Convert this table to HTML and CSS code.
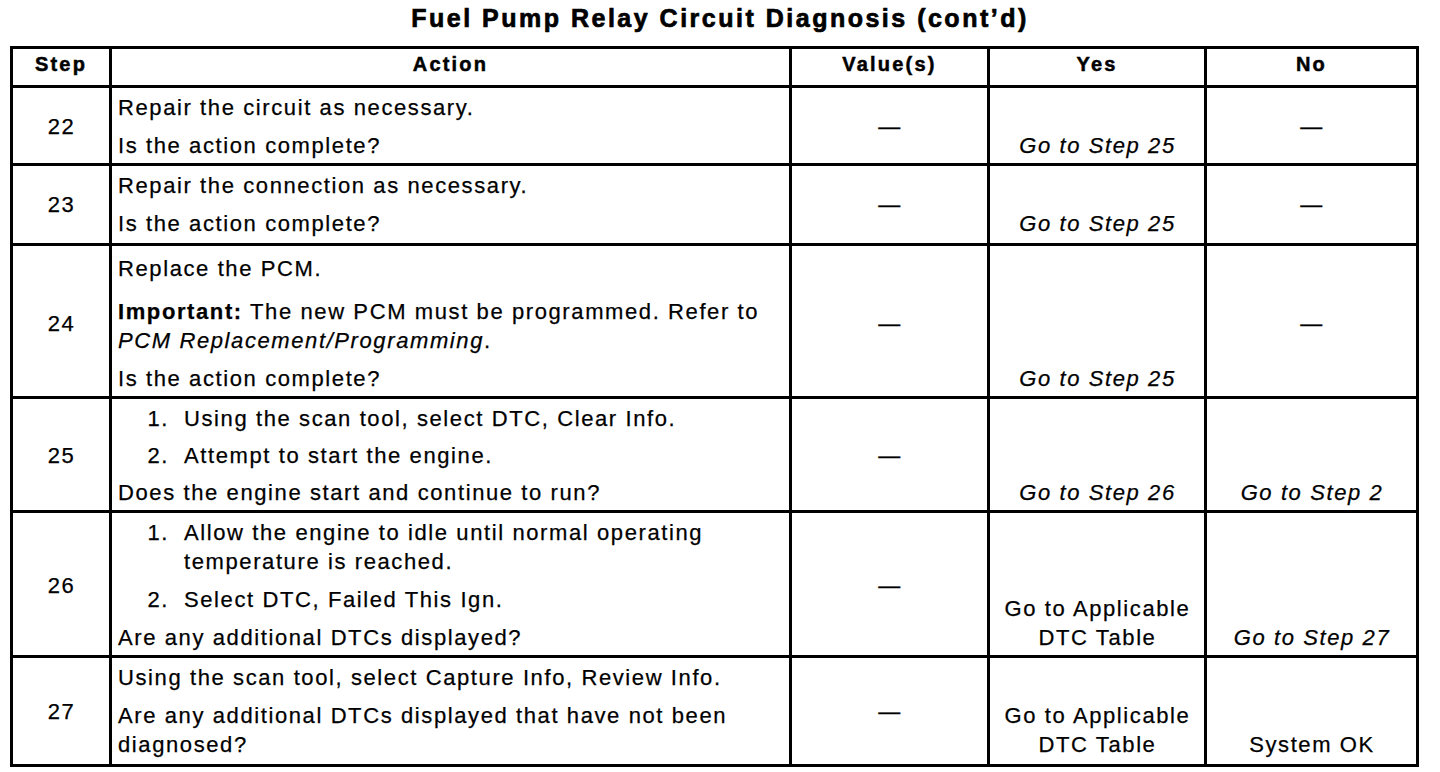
FILE: index.html
```html
<!DOCTYPE html>
<html lang="en">
<head>
<meta charset="utf-8">
<title>Fuel Pump Relay Circuit Diagnosis (cont'd)</title>
<link rel="stylesheet" href="styles.css">
</head>
<body>
<h1 class="title">Fuel Pump Relay Circuit Diagnosis (cont’d)</h1>
<table class="diag">
  <colgroup>
    <col class="c-step"><col class="c-action"><col class="c-value"><col class="c-yes"><col class="c-no">
  </colgroup>
  <thead>
    <tr><th>Step</th><th>Action</th><th>Value(s)</th><th>Yes</th><th>No</th></tr>
  </thead>
  <tbody>
    <tr class="r22">
      <td class="step">22</td>
      <td class="action"><p>Repair the circuit as necessary.</p><p>Is the action complete?</p></td>
      <td class="value">—</td>
      <td class="yes"><em>Go to Step 25</em></td>
      <td class="no dash">—</td>
    </tr>
    <tr class="r23">
      <td class="step">23</td>
      <td class="action"><p>Repair the connection as necessary.</p><p>Is the action complete?</p></td>
      <td class="value">—</td>
      <td class="yes"><em>Go to Step 25</em></td>
      <td class="no dash">—</td>
    </tr>
    <tr class="r24">
      <td class="step">24</td>
      <td class="action"><p>Replace the PCM.</p><p><strong>Important:</strong> The new PCM must be programmed. Refer to <em>PCM Replacement/Programming</em>.</p><p>Is the action complete?</p></td>
      <td class="value">—</td>
      <td class="yes"><em>Go to Step 25</em></td>
      <td class="no dash">—</td>
    </tr>
    <tr class="r25">
      <td class="step">25</td>
      <td class="action">
        <div class="li"><span class="num">1.</span><span>Using the scan tool, select DTC, Clear Info.</span></div>
        <div class="li"><span class="num">2.</span><span>Attempt to start the engine.</span></div>
        <p>Does the engine start and continue to run?</p>
      </td>
      <td class="value">—</td>
      <td class="yes"><em>Go to Step 26</em></td>
      <td class="no"><em>Go to Step 2</em></td>
    </tr>
    <tr class="r26">
      <td class="step">26</td>
      <td class="action">
        <div class="li"><span class="num">1.</span><span>Allow the engine to idle until normal operating temperature is reached.</span></div>
        <div class="li"><span class="num">2.</span><span>Select DTC, Failed This Ign.</span></div>
        <p>Are any additional DTCs displayed?</p>
      </td>
      <td class="value">—</td>
      <td class="yes">Go to Applicable<br>DTC Table</td>
      <td class="no"><em>Go to Step 27</em></td>
    </tr>
    <tr class="r27">
      <td class="step">27</td>
      <td class="action"><p>Using the scan tool, select Capture Info, Review Info.</p><p>Are any additional DTCs displayed that have not been diagnosed?</p></td>
      <td class="value">—</td>
      <td class="yes">Go to Applicable<br>DTC Table</td>
      <td class="no">System OK</td>
    </tr>
  </tbody>
</table>
</body>
</html>
```

FILE: styles.css
```css
html, body {
  margin: 0;
  padding: 0;
  background: #fff;
  color: #000;
  font-family: "Liberation Sans", Arial, sans-serif;
}

.title {
  margin: 0 0 10px 0;
  font-size: 25px;
  line-height: 36px;
  font-weight: 700;
  letter-spacing: 2.5px;
  text-align: center;
  -webkit-text-stroke: 0.7px #000;
}

.diag {
  margin-left: 10px;
  width: 1406px;
  table-layout: fixed;
  border-collapse: collapse;
  border: 3px solid #000;
  font-size: 22px;
  letter-spacing: 1.6px;
}

.c-step { width: 99px; }
.c-action { width: 680px; }
.c-value { width: 198px; }
.c-yes { width: 217px; }
.c-no { width: 212px; }

.diag th,
.diag td {
  border: 3px solid #000;
}

.diag th {
  font-size: 20px;
  line-height: 22px;
  font-weight: 700;
  letter-spacing: 2.2px;
  padding: 4px 0 10px 0;
  text-align: center;
  -webkit-text-stroke: 0.5px #000;
}

.diag td {
  line-height: 29px;
  padding: 5px 5px 3px 6px;
  -webkit-text-stroke: 0.25px #000;
}

.step {
  text-align: center;
  vertical-align: middle;
}

.action {
  vertical-align: top;
}

.action p {
  margin: 0 0 9px 0;
}

.action p:last-child {
  margin-bottom: 0;
}

.li {
  display: flex;
  margin-bottom: 9px;
}

.num {
  flex: 0 0 51px;
  text-align: right;
  margin-right: 15px;
}

.value {
  text-align: center;
  vertical-align: middle;
}

.yes,
.no {
  text-align: center;
  vertical-align: bottom;
}

.no.dash {
  vertical-align: middle;
}

.r23 td {
  padding-bottom: 5px;
}

.r24 td {
  padding-top: 8px;
}

.r24 .action p:first-child {
  margin-bottom: 14px;
}

.r25 .li {
  margin-bottom: 8px;
}

.r27 td {
  padding-bottom: 5px;
}

em {
  font-style: italic;
}

strong {
  font-weight: 700;
}
```
